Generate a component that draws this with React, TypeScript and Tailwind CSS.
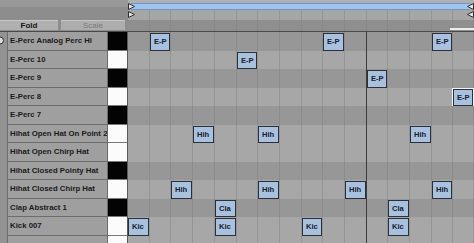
import React from "react";

const COLS = [
	"w-[22px]", "w-[21px]", "w-[22px]", "w-[22px]",
	"w-[22px]", "w-[21px]", "w-[22px]", "w-[22px]",
	"w-[21px]", "w-[22px]", "w-[22px]", "w-[21px]",
	"w-[22px]", "w-[22px]", "w-[21px]", "w-[21px]",
];

type Row = {
	name: string;
	black: boolean;
	notes: number[];
	tag?: string;
	selected?: number;
};

const ROWS: Row[] = [
	{ name: "E-Perc Analog Perc Hi", black: true, notes: [1, 9, 14], tag: "E-P" },
	{ name: "E-Perc 10", black: false, notes: [5], tag: "E-P" },
	{ name: "E-Perc 9", black: true, notes: [11], tag: "E-P" },
	{ name: "E-Perc 8", black: false, notes: [15], tag: "E-P", selected: 15 },
	{ name: "E-Perc 7", black: true, notes: [] },
	{ name: "Hihat Open Hat On Point 2", black: false, notes: [3, 6, 13], tag: "Hih" },
	{ name: "Hihat Open Chirp Hat", black: false, notes: [] },
	{ name: "Hihat Closed Pointy Hat", black: true, notes: [] },
	{ name: "Hihat Closed Chirp Hat", black: false, notes: [2, 6, 10, 14], tag: "Hih" },
	{ name: "Clap Abstract 1", black: true, notes: [4, 12], tag: "Cla" },
	{ name: "Kick 007", black: false, notes: [0, 4, 8, 12], tag: "Kic" },
	{ name: "", black: false, notes: [] },
];

const Marker = ({ dir }: { dir: "right" | "left" }) => (
	<svg width="7" height="7" viewBox="0 0 7 7">
		<polygon
			points={dir === "right" ? "0.5,0.5 6.5,3.5 0.5,6.5" : "6.5,0.5 0.5,3.5 6.5,6.5"}
			fill="#e6e6e6"
			stroke="#2e2e2e"
			strokeWidth="1"
		/>
	</svg>
);

const Note = ({ tag, selected }: { tag: string; selected?: boolean }) => (
	<div
		className={`flex-1 flex items-center pl-[3px] border border-[#2a2f38] bg-[#a8c1df] text-[7.6px] font-bold text-[#17202e] leading-none ${
			selected ? "shadow-[0_0_0_1px_#f4f4f4]" : ""
		}`}
	>
		{tag}
	</div>
);

export default function App() {
	return (
		<div className="w-[474px] h-[243px] overflow-hidden flex flex-col bg-[#8d8d8d] font-['Liberation_Sans',Arial,sans-serif]">
			{/* header */}
			<div className="flex h-[32px] shrink-0 border-b border-[#4a4a4a]">
				<div className="w-[128px] flex flex-col bg-[#8d8d8d]">
					<div className="h-[7px] bg-[#999999]" />
					<div className="flex-1" />
					<div className="flex gap-[3px] h-[10px] mb-[1px]">
						<div className="w-[58px] flex items-center justify-center bg-[#b0b0b0] border-t border-[#c6c6c6] text-[8px] font-bold text-[#151515] leading-none">
							Fold
						</div>
						<div className="w-[64px] flex items-center justify-center bg-[#adadad] border-t border-[#c4c4c4] text-[8px] text-[#7a7a7a] leading-none">
							Scale
						</div>
					</div>
				</div>
				<div className="relative w-[346px] flex flex-col">
					<div className="h-[3px] bg-[#b0b0b0]" />
					<div className="h-[7px] bg-[#a9a9a9] flex pl-[3px] pr-[4px]">
						<div className="flex-1 bg-[#9ec4f0] border-y border-[#7196c6]" />
					</div>
					<div className="h-[10px] flex bg-[#a6a6a6]">
						{COLS.map((w, i) => (
							<div key={i} className={`${w} border-r border-[#959595]`} />
						))}
					</div>
					<div className="relative h-[11px] flex bg-[#8f8f8f]">
						{COLS.map((w, i) => (
							<div key={i} className={`${w} border-r border-[#888888]`} />
						))}
						<div className="absolute right-0 bottom-[1px] w-[24px] h-[2px] bg-[#ececec]" />
					</div>
					<div className="absolute left-0 top-[3px]">
						<Marker dir="right" />
					</div>
					<div className="absolute left-0 top-[11px]">
						<Marker dir="right" />
					</div>
					<div className="absolute right-0 top-[3px]">
						<Marker dir="left" />
					</div>
					<div className="absolute right-0 top-[11px]">
						<Marker dir="left" />
					</div>
				</div>
			</div>

			{/* rows */}
			{ROWS.map((row, r) => (
				<div key={r} className={`flex shrink-0 ${r % 2 === 0 ? "h-[19px]" : "h-[18px]"}`}>
					<div className="relative w-[7px] bg-[#929292] overflow-hidden">
						{r === 0 && (
							<svg className="absolute left-0 top-[4px]" width="7" height="9" viewBox="0 0 7 9">
								<circle cx="0" cy="4.5" r="3.5" fill="#dcdcdc" stroke="#2e2e2e" strokeWidth="1" />
							</svg>
						)}
					</div>
					<div className="w-[101px] flex items-center pl-[2px] bg-[#9f9f9f] border-x border-b border-[#6c6c6c] overflow-hidden whitespace-nowrap text-[7.8px] font-bold text-[#1a1a1a] leading-none">
						{row.name}
					</div>
					<div
						className={`w-[19px] border-b border-[#7a7a7a] ${row.black ? "bg-[#030303]" : "bg-[#fbfbfb]"}`}
					/>
					<div className="w-px bg-[#5a5a5a]" />
					<div className={`flex ${row.black ? "bg-[#979797]" : "bg-[#a7a7a7]"}`}>
						{COLS.map((w, i) => (
							<div
								key={i}
								className={`${w} flex pt-px border-r ${
									i === 10 ? "border-[#3c3c3c]" : row.black ? "border-[#8b8b8b]" : "border-[#959595]"
								}`}
							>
								{row.notes.includes(i) && row.tag && (
									<Note tag={row.tag} selected={row.selected === i} />
								)}
							</div>
						))}
					</div>
				</div>
			))}
		</div>
	);
}
